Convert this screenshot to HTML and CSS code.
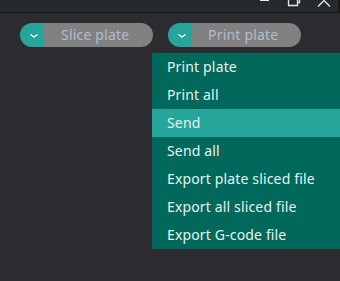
FILE: index.html
```html
<!DOCTYPE html>
<html>
<head>
<meta charset="utf-8">
<link rel="stylesheet" href="styles.css">
</head>
<body>
<div class="titlebar">
  <div class="ctrl min"></div>
  <svg class="ctrl restore" width="14" height="8" viewBox="0 0 14 8"><path d="M1.5 -4 V5.5 H10.5 V-4" fill="none" stroke="#e8e8e8" stroke-width="1.3"/><path d="M10.5 2.5 H12.5 V-4" fill="none" stroke="#e8e8e8" stroke-width="1.3"/></svg>
  <svg class="ctrl close" width="14" height="8" viewBox="0 0 14 8"><path d="M1 6.5 L7 0.5 L13 6.5" fill="none" stroke="#e8e8e8" stroke-width="1.3"/></svg>
</div>
<div class="main">
  <div class="toolbar">
    <div class="pill">
      <div class="drop"><svg width="10" height="6" viewBox="0 0 10 6"><path d="M1.5 1.5 L5 4 L8.5 1.5" fill="none" stroke="#ffffff" stroke-width="1.4"/></svg></div>
      <div class="label">Slice plate</div>
    </div>
    <div class="pill">
      <div class="drop"><svg width="10" height="6" viewBox="0 0 10 6"><path d="M1.5 1.5 L5 4 L8.5 1.5" fill="none" stroke="#ffffff" stroke-width="1.4"/></svg></div>
      <div class="label">Print plate</div>
    </div>
  </div>
  <div class="menu">
    <div class="item">Print plate</div>
    <div class="item">Print all</div>
    <div class="item active">Send</div>
    <div class="item">Send all</div>
    <div class="item">Export plate sliced file</div>
    <div class="item">Export all sliced file</div>
    <div class="item">Export G-code file</div>
  </div>
</div>
</body>
</html>
```
FILE: styles.css
```css
html, body {
  margin: 0;
  padding: 0;
  width: 340px;
  height: 281px;
  overflow: hidden;
  background: #2c2b30;
  font-family: "Noto Sans", "DejaVu Sans", sans-serif;
}
.titlebar {
  height: 12px;
  background: #262a2e;
  border-bottom: 1px solid #17191b;
  border-right: 2px solid #17191b;
  position: relative;
}
.ctrl { position: absolute; top: 0; }
.min { left: 260px; width: 9px; height: 1px; background: #e8e8e8; }
.restore { left: 287px; }
.close { left: 317px; }
.main {
  position: relative;
  height: 268px;
}
.toolbar {
  display: flex;
  gap: 15px;
  padding: 10px 0 0 20px;
}
.pill {
  display: flex;
  height: 24px;
  border-radius: 12px;
  overflow: hidden;
}
.drop {
  width: 24px;
  background: #26a69a;
  display: flex;
  align-items: center;
  justify-content: center;
}
.drop svg { margin-left: 3px; margin-top: 1px; }
.label {
  background: #818181;
  color: #b3bccd;
  font-size: 14px;
  line-height: 24px;
  letter-spacing: 0.2px;
  padding: 0 20px 0 17px;
  width: 72px;
}
.pill + .pill .label { width: 73px; padding-left: 16px; }
.menu {
  position: absolute;
  left: 152px;
  top: 40px;
  width: 190px;
  background: #00695c;
}
.item {
  height: 28px;
  line-height: 28px;
  padding-left: 15px;
  color: #e4f4f1;
  font-size: 14px;
  letter-spacing: 0.15px;
  white-space: nowrap;
}
.item.active { background: #26a69a; }
```
